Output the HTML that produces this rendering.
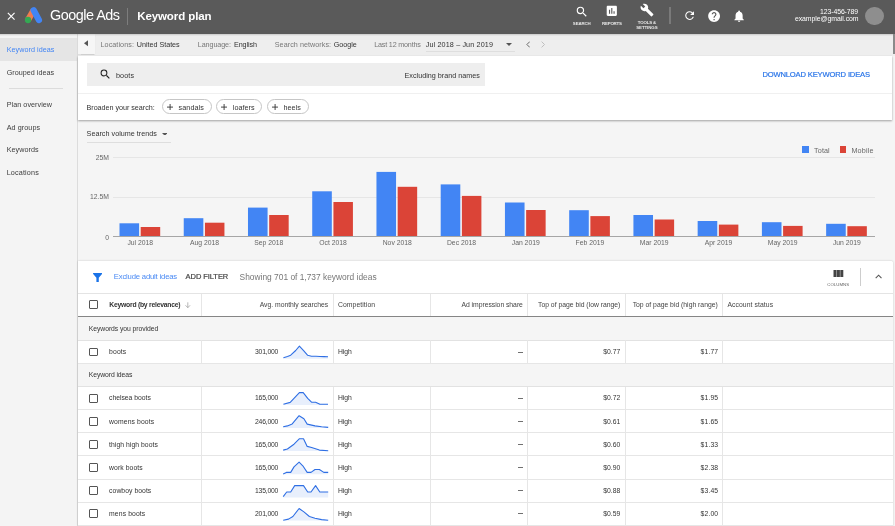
<!DOCTYPE html>
<html><head><meta charset="utf-8"><title>Keyword plan</title>
<style>
html,body{margin:0;padding:0;}
body{width:895px;height:526px;overflow:hidden;position:relative;background:#f5f5f5;font-family:"Liberation Sans",sans-serif;}
.t{position:absolute;white-space:nowrap;display:block;}
.r{position:absolute;display:block;}
#w{position:absolute;left:0;top:0;width:895px;height:526px;will-change:transform;}
</style></head><body><div id="w">
<div class="r" style="left:0px;top:0px;width:895.00px;height:33.50px;background:#5a5a5a;"></div>
<svg class="r" style="left:7px;top:12px" width="8.4" height="8.4" viewBox="0 0 10 10"><path d="M1 1L9 9M9 1L1 9" stroke="#fff" stroke-width="1.4" fill="none"/></svg>
<svg class="r" style="left:0;top:0" width="60" height="34" viewBox="0 0 60 34">
<path d="M28 20 L33.600 10.300" stroke="#ef7c4f" stroke-width="6.300" stroke-linecap="butt" fill="none"/>
<path d="M33.700 10.300 L38.900 19.900" stroke="#4285f4" stroke-width="6.300" stroke-linecap="round" fill="none"/>
<circle cx="28" cy="20" r="3.150" fill="#34a853"/>
</svg>
<span class="t" style="left:50.00px;top:4.04px;font-size:14.4px;line-height:23px;color:#fff;letter-spacing:-0.485px;">Google Ads</span>
<div class="r" style="left:127.2px;top:7.5px;width:1.10px;height:17.00px;background:#7d7d7d;"></div>
<span class="t" style="left:137.20px;top:7.15px;font-size:11.5px;line-height:18px;color:#fff;font-weight:bold;letter-spacing:-0.092px;">Keyword plan</span>
<svg class="r" style="left:575.2px;top:4.5px" width="13.7" height="13.7" viewBox="0 0 24 24"><path fill="#fff" d="M15.5 14h-.79l-.28-.27A6.471 6.471 0 0 0 16 9.5 6.5 6.5 0 1 0 9.5 16c1.61 0 3.09-.59 4.23-1.57l.27.28v.79l5 4.99L20.49 19l-4.99-5zm-6 0C7.01 14 5 11.99 5 9.500S7.01 5 9.5 5 14 7.01 14 9.500 11.990 14 9.500 14z"/></svg>
<span class="t" style="left:572.85px;top:19.74px;font-size:4.4px;line-height:7px;color:#e8e8e8;font-weight:bold;letter-spacing:-0.147px;">SEARCH</span>
<svg class="r" style="left:605.2px;top:4.2px" width="13.6" height="13.6" viewBox="0 0 24 24"><path fill="#fff" d="M19 3H5c-1.1 0-2 .9-2 2v14c0 1.100.9 2 2 2h14c1.100 0 2-.9 2-2V5c0-1.100-.9-2-2-2zM9 17H7v-7h2v7zm4 0h-2V7h2v10zm4 0h-2v-4h2v4z"/></svg>
<span class="t" style="left:601.90px;top:19.74px;font-size:4.4px;line-height:7px;color:#e8e8e8;font-weight:bold;letter-spacing:-0.181px;">REPORTS</span>
<svg class="r" style="left:640.1px;top:3.4px" width="14" height="14" viewBox="0 0 24 24"><path fill="#fff" d="M22.700 19l-9.100-9.100c.9-2.300.4-5-1.500-6.900-2-2-5-2.400-7.400-1.300L9 6 6 9 1.600 4.700C.4 7.100.9 10.100 2.900 12.100c1.900 1.900 4.600 2.400 6.900 1.500l9.100 9.100c.4.4 1 .4 1.400 0l2.300-2.300c.5-.4.5-1.100.1-1.400z"/></svg>
<span class="t" style="left:637.77px;top:18.64px;font-size:4.4px;line-height:7px;color:#e8e8e8;font-weight:bold;letter-spacing:-0.175px;">TOOLS &amp;</span>
<span class="t" style="left:636.27px;top:23.74px;font-size:4.4px;line-height:7px;color:#e8e8e8;font-weight:bold;letter-spacing:-0.094px;">SETTINGS</span>
<div class="r" style="left:669px;top:7px;width:1.60px;height:17.40px;background:#7a7a7a;"></div>
<svg class="r" style="left:682.5px;top:9.3px" width="13.2" height="13.2" viewBox="0 0 24 24"><path fill="#fff" d="M17.650 6.350A7.958 7.958 0 0 0 12 4c-4.420 0-7.990 3.580-7.990 8s3.570 8 7.990 8c3.730 0 6.840-2.550 7.730-6h-2.080A5.990 5.990 0 0 1 12 18c-3.310 0-6-2.690-6-6s2.690-6 6-6c1.660 0 3.140.69 4.220 1.780L13 11h7V4l-2.350 2.350z"/></svg>
<svg class="r" style="left:706.7px;top:8.65px" width="14.2" height="14.2" viewBox="0 0 24 24"><path fill="#fff" d="M12 2C6.480 2 2 6.480 2 12s4.480 10 10 10 10-4.480 10-10S17.520 2 12 2zm1 17h-2v-2h2v2zm2.070-7.750l-.9.920C13.450 12.900 13 13.500 13 15h-2v-.5c0-1.100.45-2.100 1.170-2.830l1.240-1.260c.37-.36.590-.86.590-1.410 0-1.100-.9-2-2-2s-2 .9-2 2H8c0-2.210 1.790-4 4-4s4 1.790 4 4c0 .88-.36 1.680-.93 2.250z"/></svg>
<svg class="r" style="left:731.7px;top:8.9px" width="14.2" height="14.2" viewBox="0 0 24 24"><path fill="#fff" d="M12 22c1.100 0 2-.9 2-2h-4c0 1.100.89 2 2 2zm6-6v-5c0-3.070-1.640-5.640-4.500-6.320V4c0-.83-.67-1.500-1.500-1.500s-1.500.67-1.500 1.500v.68C7.630 5.360 6 7.920 6 11v5l-2 2v1h16v-1l-2-2z"/></svg>
<span class="t" style="left:820.10px;top:5.69px;font-size:6.9px;line-height:11px;color:#fff;letter-spacing:-0.112px;">123-456-789</span>
<span class="t" style="left:794.90px;top:13.19px;font-size:6.9px;line-height:11px;color:#fff;letter-spacing:-0.049px;">example@gmail.com</span>
<div class="r" style="left:865.2px;top:6.8px;width:18.6px;height:18.6px;border-radius:50%;background:#8e8e8e"></div>
<div class="r" style="left:0px;top:33.5px;width:78.00px;height:492.50px;background:#f4f4f4;border-right:1px solid #dcdcdc;box-sizing:border-box;"></div>
<div class="r" style="left:0px;top:38.2px;width:77.00px;height:22.50px;background:#e5e5e5;"></div>
<span class="t" style="left:6.70px;top:44.22px;font-size:7.2px;line-height:12px;color:#4285f4;letter-spacing:0.044px;">Keyword ideas</span>
<span class="t" style="left:6.70px;top:66.72px;font-size:7.2px;line-height:12px;color:#3c3c3c;letter-spacing:0.021px;">Grouped ideas</span>
<div class="r" style="left:9px;top:87.8px;width:54.30px;height:0.80px;background:#dcdcdc;"></div>
<span class="t" style="left:6.70px;top:99.02px;font-size:7.2px;line-height:12px;color:#3c3c3c;letter-spacing:0.052px;">Plan overview</span>
<span class="t" style="left:6.70px;top:121.82px;font-size:7.2px;line-height:12px;color:#3c3c3c;letter-spacing:0.075px;">Ad groups</span>
<span class="t" style="left:6.70px;top:144.32px;font-size:7.2px;line-height:12px;color:#3c3c3c;letter-spacing:0.048px;">Keywords</span>
<span class="t" style="left:6.70px;top:166.82px;font-size:7.2px;line-height:12px;color:#3c3c3c;letter-spacing:0.164px;">Locations</span>
<div class="r" style="left:77.5px;top:33.5px;width:817.50px;height:22.50px;background:#eeeeee;"></div>
<div class="r" style="left:78px;top:33.5px;width:17.20px;height:20.50px;background:#f6f6f6;box-shadow:0 0.5px 1px rgba(0,0,0,.13);"></div>
<svg class="r" style="left:84.3px;top:40.3px" width="4" height="6.5" viewBox="0 0 4 6"><path d="M4 0L0 3L4 6Z" fill="#555"/></svg>
<span class="t" style="left:100.50px;top:38.92px;font-size:7.2px;line-height:12px;color:#777;letter-spacing:0.068px;">Locations:</span>
<span class="t" style="left:136.75px;top:38.92px;font-size:7.2px;line-height:12px;color:#333;letter-spacing:-0.017px;">United States</span>
<span class="t" style="left:197.75px;top:38.92px;font-size:7.2px;line-height:12px;color:#777;letter-spacing:-0.087px;">Language:</span>
<span class="t" style="left:234.00px;top:38.92px;font-size:7.2px;line-height:12px;color:#333;letter-spacing:-0.088px;">English</span>
<span class="t" style="left:274.75px;top:38.92px;font-size:7.2px;line-height:12px;color:#777;letter-spacing:0.055px;">Search networks:</span>
<span class="t" style="left:333.75px;top:38.92px;font-size:7.2px;line-height:12px;color:#333;letter-spacing:-0.036px;">Google</span>
<span class="t" style="left:374.25px;top:38.92px;font-size:7.2px;line-height:12px;color:#777;letter-spacing:-0.195px;">Last 12 months</span>
<span class="t" style="left:425.75px;top:38.92px;font-size:7.2px;line-height:12px;color:#333;letter-spacing:0.134px;">Jul 2018 – Jun 2019</span>
<svg class="r" style="left:505.7px;top:42.8px" width="6" height="3" viewBox="0 0 6 3"><path d="M0 0L6 0L3 3Z" fill="#555"/></svg>
<div class="r" style="left:425.5px;top:51px;width:89.50px;height:0.60px;background:#dedede;"></div>
<svg class="r" style="left:526px;top:40.7px" width="4.4" height="7" viewBox="0 0 4.4 7"><path d="M3.8 0.6L0.9 3.5L3.8 6.4" stroke="#606060" stroke-width="0.950" fill="none"/></svg>
<svg class="r" style="left:541.4px;top:40.7px" width="4.4" height="7" viewBox="0 0 4.4 7"><path d="M0.6 0.6L3.5 3.5L0.600 6.4" stroke="#bcbcbc" stroke-width="0.950" fill="none"/></svg>
<div class="r" style="left:0px;top:34px;width:895.00px;height:2.00px;background:linear-gradient(rgba(0,0,0,0.16),rgba(0,0,0,0));"></div>
<div class="r" style="left:893px;top:33.5px;width:2.00px;height:20.50px;background:#8a8a8a;"></div>
<div class="r" style="left:78px;top:56px;width:814.30px;height:64.00px;background:#fff;box-shadow:0 1px 2px rgba(0,0,0,.35);"></div>
<div class="r" style="left:86.5px;top:63px;width:398.20px;height:22.60px;background:#eeeeee;"></div>
<svg class="r" style="left:98.9px;top:68.4px" width="12.6" height="12.6" viewBox="0 0 24 24"><path fill="#222" d="M15.500 14h-.79l-.28-.27A6.471 6.471 0 0 0 16 9.500 6.500 6.500 0 1 0 9.500 16c1.610 0 3.090-.59 4.230-1.570l.27.28v.79l5 4.990L20.490 19l-4.990-5zm-6 0C7.010 14 5 11.990 5 9.500S7.010 5 9.500 5 14 7.010 14 9.500 11.990 14 9.500 14z"/></svg>
<span class="t" style="left:116.00px;top:69.72px;font-size:7.2px;line-height:12px;color:#333;letter-spacing:0.127px;">boots</span>
<span class="t" style="left:404.50px;top:69.72px;font-size:7.2px;line-height:12px;color:#333;letter-spacing:0.012px;">Excluding brand names</span>
<span class="t" style="left:762.40px;top:69.06px;font-size:7.6px;line-height:12px;color:#2a75e8;letter-spacing:-0.157px;-webkit-text-stroke:0.2px #2a75e8;">DOWNLOAD KEYWORD IDEAS</span>
<div class="r" style="left:78px;top:92.8px;width:814.30px;height:0.80px;background:#f0f0f0;"></div>
<span class="t" style="left:86.50px;top:101.72px;font-size:7.2px;line-height:12px;color:#333;letter-spacing:-0.029px;">Broaden your search:</span>
<div class="r" style="left:162px;top:99.4px;width:49.5px;height:15px;box-sizing:border-box;border:0.8px solid #c6c6c6;border-radius:7.5px;background:#fff"></div>
<svg class="r" style="left:166.5px;top:103.7px" width="6.200" height="6.200" viewBox="0 0 6.2 6.2"><path d="M3.100 0V6.200M0 3.100H6.200" stroke="#333" stroke-width="0.900"/></svg>
<span class="t" style="left:178.50px;top:101.72px;font-size:7.2px;line-height:12px;color:#333;letter-spacing:0.098px;">sandals</span>
<div class="r" style="left:216px;top:99.4px;width:46.19999999999999px;height:15px;box-sizing:border-box;border:0.8px solid #c6c6c6;border-radius:7.5px;background:#fff"></div>
<svg class="r" style="left:220.8px;top:103.7px" width="6.200" height="6.200" viewBox="0 0 6.2 6.2"><path d="M3.100 0V6.200M0 3.100H6.200" stroke="#333" stroke-width="0.900"/></svg>
<span class="t" style="left:232.75px;top:101.72px;font-size:7.2px;line-height:12px;color:#333;letter-spacing:0.056px;">loafers</span>
<div class="r" style="left:267px;top:99.4px;width:41.80000000000001px;height:15px;box-sizing:border-box;border:0.8px solid #c6c6c6;border-radius:7.5px;background:#fff"></div>
<svg class="r" style="left:271.5px;top:103.7px" width="6.200" height="6.200" viewBox="0 0 6.2 6.2"><path d="M3.100 0V6.200M0 3.100H6.200" stroke="#333" stroke-width="0.900"/></svg>
<span class="t" style="left:283.50px;top:101.72px;font-size:7.2px;line-height:12px;color:#333;letter-spacing:0.017px;">heels</span>
<span class="t" style="left:86.60px;top:128.12px;font-size:7.2px;line-height:12px;color:#333;letter-spacing:0.023px;">Search volume trends</span>
<svg class="r" style="left:161.6px;top:132.5px" width="5.6" height="2.8" viewBox="0 0 6 3"><path d="M0 0L6 0L3 3Z" fill="#555"/></svg>
<div class="r" style="left:86.6px;top:141.8px;width:84.40px;height:0.70px;background:#dedede;"></div>
<div class="r" style="left:112.7px;top:156.5px;width:762.50px;height:0.70px;background:#e6e6e6;"></div>
<div class="r" style="left:112.7px;top:196.6px;width:762.50px;height:0.70px;background:#e6e6e6;"></div>
<span class="t" style="left:95.77px;top:152.18px;font-size:6.8px;line-height:11px;color:#666;">25M</span>
<span class="t" style="left:90.10px;top:190.98px;font-size:6.8px;line-height:11px;color:#666;">12.5M</span>
<span class="t" style="left:105.22px;top:231.68px;font-size:6.8px;line-height:11px;color:#666;">0</span>
<span class="t" style="left:127.45px;top:237.28px;font-size:6.8px;line-height:11px;color:#666;">Jul 2018</span>
<span class="t" style="left:189.98px;top:237.28px;font-size:6.8px;line-height:11px;color:#666;">Aug 2018</span>
<span class="t" style="left:254.22px;top:237.28px;font-size:6.8px;line-height:11px;color:#666;">Sep 2018</span>
<span class="t" style="left:319.22px;top:237.28px;font-size:6.8px;line-height:11px;color:#666;">Oct 2018</span>
<span class="t" style="left:382.71px;top:237.28px;font-size:6.8px;line-height:11px;color:#666;">Nov 2018</span>
<span class="t" style="left:446.95px;top:237.28px;font-size:6.8px;line-height:11px;color:#666;">Dec 2018</span>
<span class="t" style="left:511.75px;top:237.28px;font-size:6.8px;line-height:11px;color:#666;">Jan 2019</span>
<span class="t" style="left:575.61px;top:237.28px;font-size:6.8px;line-height:11px;color:#666;">Feb 2019</span>
<span class="t" style="left:639.86px;top:237.28px;font-size:6.8px;line-height:11px;color:#666;">Mar 2019</span>
<span class="t" style="left:704.66px;top:237.28px;font-size:6.8px;line-height:11px;color:#666;">Apr 2019</span>
<span class="t" style="left:767.77px;top:237.28px;font-size:6.8px;line-height:11px;color:#666;">May 2019</span>
<span class="t" style="left:832.95px;top:237.28px;font-size:6.8px;line-height:11px;color:#666;">Jun 2019</span>
<svg class="r" style="left:0;top:0" width="895" height="260" viewBox="0 0 895 260"><rect x="119.50" y="223.30" width="19.6" height="13.10" fill="#4285f4"/><rect x="140.70" y="227.00" width="19.5" height="9.40" fill="#db4437"/><rect x="183.74" y="218.20" width="19.6" height="18.20" fill="#4285f4"/><rect x="204.94" y="222.70" width="19.5" height="13.70" fill="#db4437"/><rect x="247.98" y="207.60" width="19.6" height="28.80" fill="#4285f4"/><rect x="269.18" y="215.00" width="19.5" height="21.40" fill="#db4437"/><rect x="312.22" y="191.30" width="19.6" height="45.10" fill="#4285f4"/><rect x="333.42" y="202.00" width="19.5" height="34.40" fill="#db4437"/><rect x="376.46" y="171.90" width="19.6" height="64.50" fill="#4285f4"/><rect x="397.66" y="186.80" width="19.5" height="49.60" fill="#db4437"/><rect x="440.70" y="184.40" width="19.6" height="52.00" fill="#4285f4"/><rect x="461.90" y="195.90" width="19.5" height="40.50" fill="#db4437"/><rect x="504.94" y="202.50" width="19.6" height="33.90" fill="#4285f4"/><rect x="526.14" y="210.00" width="19.5" height="26.40" fill="#db4437"/><rect x="569.18" y="210.20" width="19.6" height="26.20" fill="#4285f4"/><rect x="590.38" y="216.10" width="19.5" height="20.30" fill="#db4437"/><rect x="633.42" y="215.00" width="19.6" height="21.40" fill="#4285f4"/><rect x="654.62" y="219.50" width="19.5" height="16.90" fill="#db4437"/><rect x="697.66" y="221.00" width="19.6" height="15.40" fill="#4285f4"/><rect x="718.86" y="224.60" width="19.5" height="11.80" fill="#db4437"/><rect x="761.90" y="222.20" width="19.6" height="14.20" fill="#4285f4"/><rect x="783.10" y="225.90" width="19.5" height="10.50" fill="#db4437"/><rect x="826.14" y="223.80" width="19.6" height="12.60" fill="#4285f4"/><rect x="847.34" y="226.20" width="19.5" height="10.20" fill="#db4437"/></svg>
<div class="r" style="left:112.7px;top:236.3px;width:762.50px;height:0.80px;background:#a6a6a6;"></div>
<div class="r" style="left:802.2px;top:146px;width:6.80px;height:6.60px;background:#4285f4;"></div>
<span class="t" style="left:814.10px;top:144.52px;font-size:7.2px;line-height:12px;color:#666;letter-spacing:0.098px;">Total</span>
<div class="r" style="left:839.7px;top:146px;width:6.80px;height:6.60px;background:#db4437;"></div>
<span class="t" style="left:851.40px;top:144.52px;font-size:7.2px;line-height:12px;color:#666;letter-spacing:0.182px;">Mobile</span>
<div class="r" style="left:78px;top:261px;width:814.60px;height:265.00px;background:#fff;box-shadow:0 0 2px rgba(0,0,0,.22);border-radius:0 1.500px 0 0;"></div>
<svg class="r" style="left:93.3px;top:272.7px" width="9.2" height="9.3" viewBox="0 0 10 10" preserveAspectRatio="none"><path fill="#1a73e8" d="M0.3 0H9.7Q10.300 0.3 9.800 1L6.300 5.200V9.500Q6.300 10 5.800 10H4.200Q3.700 10 3.700 9.500V5.200L0.200 1Q-0.300 0.300 0.300 0Z"/></svg>
<span class="t" style="left:113.80px;top:271.17px;font-size:7.7px;line-height:12px;color:#4a8af4;letter-spacing:-0.183px;">Exclude adult ideas</span>
<span class="t" style="left:185.60px;top:271.25px;font-size:7.5px;line-height:12px;color:#444;letter-spacing:-0.060px;-webkit-text-stroke:0.2px #444;">ADD FILTER</span>
<span class="t" style="left:239.60px;top:270.84px;font-size:8.4px;line-height:13px;color:#777;letter-spacing:0.003px;">Showing 701 of 1,737 keyword ideas</span>
<svg class="r" style="left:833px;top:269px" width="12" height="9" viewBox="0 0 12 9"><path d="M0.500 0.900h3v7.200h-3zM3.900 0.900h3v7.200h-3zM7.300 0.900h3v7.200h-3z" fill="#444"/></svg>
<span class="t" style="left:827.30px;top:281.33px;font-size:4.3px;line-height:7px;color:#606060;letter-spacing:0.043px;">COLUMNS</span>
<div class="r" style="left:860px;top:268px;width:0.80px;height:17.90px;background:#cdcdcd;"></div>
<svg class="r" style="left:875px;top:274.400px" width="7.200" height="4.800" viewBox="0 0 7.2 4.8"><path d="M0.700 4.100L3.600 1.200L6.500 4.100" stroke="#555" stroke-width="1.100" fill="none"/></svg>
<div class="r" style="left:78px;top:293px;width:814.60px;height:0.70px;background:#e4e4e4;"></div>
<div class="r" style="left:89.2px;top:300.40px;width:8.8px;height:8.8px;box-sizing:border-box;border:1.1px solid #555;border-radius:1px;background:#fff"></div>
<span class="t" style="left:109.30px;top:299.28px;font-size:6.8px;line-height:11px;color:#333;font-weight:bold;letter-spacing:-0.243px;">Keyword (by relevance)</span>
<svg class="r" style="left:185.200px;top:302.20000000000005px" width="5.6" height="6.4" viewBox="0 0 5.6 6.4"><path d="M2.800 0.300V5.600M0.500 3.300L2.800 5.700L5.100 3.300" stroke="#999" stroke-width="0.700" fill="none"/></svg>
<span class="t" style="left:259.70px;top:299.28px;font-size:6.8px;line-height:11px;color:#444;letter-spacing:-0.008px;">Avg. monthly searches</span>
<span class="t" style="left:337.90px;top:299.28px;font-size:6.8px;line-height:11px;color:#444;letter-spacing:0.092px;">Competition</span>
<span class="t" style="left:461.40px;top:299.28px;font-size:6.8px;line-height:11px;color:#444;letter-spacing:-0.025px;">Ad impression share</span>
<span class="t" style="left:538.00px;top:299.28px;font-size:6.8px;line-height:11px;color:#444;">Top of page bid (low range)</span>
<span class="t" style="left:632.70px;top:299.28px;font-size:6.8px;line-height:11px;color:#444;letter-spacing:0.001px;">Top of page bid (high range)</span>
<span class="t" style="left:727.40px;top:299.28px;font-size:6.8px;line-height:11px;color:#444;letter-spacing:0.086px;">Account status</span>
<div class="r" style="left:201.25px;top:293.7px;width:0.70px;height:22.30px;background:#e6e6e6;"></div>
<div class="r" style="left:333.04999999999995px;top:293.7px;width:0.70px;height:22.30px;background:#e6e6e6;"></div>
<div class="r" style="left:430.15px;top:293.7px;width:0.70px;height:22.30px;background:#e6e6e6;"></div>
<div class="r" style="left:527.35px;top:293.7px;width:0.70px;height:22.30px;background:#e6e6e6;"></div>
<div class="r" style="left:625.25px;top:293.7px;width:0.70px;height:22.30px;background:#e6e6e6;"></div>
<div class="r" style="left:721.9499999999999px;top:293.7px;width:0.70px;height:22.30px;background:#e6e6e6;"></div>
<div class="r" style="left:78px;top:315.6px;width:814.60px;height:1.30px;background:#858585;"></div>
<div class="r" style="left:78px;top:316.9px;width:814.60px;height:23.50px;background:#f5f5f5;"></div>
<span class="t" style="left:88.80px;top:323.13px;font-size:6.8px;line-height:11px;color:#333;letter-spacing:-0.061px;">Keywords you provided</span>
<div class="r" style="left:78px;top:340.04999999999995px;width:814.60px;height:0.70px;background:#e2e2e2;"></div>
<div class="r" style="left:89.2px;top:347.60px;width:8.8px;height:8.8px;box-sizing:border-box;border:1.1px solid #555;border-radius:1px;background:#fff"></div>
<span class="t" style="left:109.10px;top:346.28px;font-size:6.8px;line-height:11px;color:#333;letter-spacing:0.113px;">boots</span>
<span class="t" style="left:255.00px;top:346.28px;font-size:6.8px;line-height:11px;color:#333;letter-spacing:-0.211px;">301,000</span>
<svg class="r" style="left:0;top:0" width="895" height="526" viewBox="0 0 895 526"><path d="M283.4 357.8 L287.5 356.5 L290.7 355.2 L295.7 350.5 L299.4 346.2 L303.6 350.6 L307.7 355.3 L311.5 356.2 L316.0 356.3 L320.0 356.5 L324.0 356.6 L328.0 356.7 L328.0 358.7 L283.4 358.7 Z" fill="#e8effc"/><path d="M283.4 357.8 L287.5 356.5 L290.7 355.2 L295.7 350.5 L299.4 346.2 L303.6 350.6 L307.7 355.3 L311.5 356.2 L316.0 356.3 L320.0 356.5 L324.0 356.6 L328.0 356.7" stroke="#2f6fe4" stroke-width="1.1" fill="none" stroke-linejoin="round"/></svg>
<span class="t" style="left:337.90px;top:346.28px;font-size:6.8px;line-height:11px;color:#333;letter-spacing:0.004px;">High</span>
<div class="r" style="left:518.4px;top:351.65px;width:4.90px;height:0.70px;background:#707070;"></div>
<span class="t" style="left:603.30px;top:346.28px;font-size:6.8px;line-height:11px;color:#333;letter-spacing:-0.023px;">$0.77</span>
<span class="t" style="left:700.60px;top:346.28px;font-size:6.8px;line-height:11px;color:#333;letter-spacing:0.117px;">$1.77</span>
<div class="r" style="left:201.25px;top:340.4px;width:0.70px;height:23.00px;background:#e6e6e6;"></div>
<div class="r" style="left:333.04999999999995px;top:340.4px;width:0.70px;height:23.00px;background:#e6e6e6;"></div>
<div class="r" style="left:430.15px;top:340.4px;width:0.70px;height:23.00px;background:#e6e6e6;"></div>
<div class="r" style="left:527.35px;top:340.4px;width:0.70px;height:23.00px;background:#e6e6e6;"></div>
<div class="r" style="left:625.25px;top:340.4px;width:0.70px;height:23.00px;background:#e6e6e6;"></div>
<div class="r" style="left:721.9499999999999px;top:340.4px;width:0.70px;height:23.00px;background:#e6e6e6;"></div>
<div class="r" style="left:78px;top:363.4px;width:814.60px;height:23.10px;background:#f5f5f5;"></div>
<span class="t" style="left:88.80px;top:369.43px;font-size:6.8px;line-height:11px;color:#333;letter-spacing:-0.085px;">Keyword ideas</span>
<div class="r" style="left:78px;top:386.15px;width:814.60px;height:0.70px;background:#e2e2e2;"></div>
<div class="r" style="left:89.2px;top:393.75px;width:8.8px;height:8.8px;box-sizing:border-box;border:1.1px solid #555;border-radius:1px;background:#fff"></div>
<span class="t" style="left:109.10px;top:392.43px;font-size:6.8px;line-height:11px;color:#333;letter-spacing:-0.020px;">chelsea boots</span>
<span class="t" style="left:255.00px;top:392.43px;font-size:6.8px;line-height:11px;color:#333;letter-spacing:-0.211px;">165,000</span>
<svg class="r" style="left:0;top:0" width="895" height="526" viewBox="0 0 895 526"><path d="M283.4 404.2 L290.2 402.4 L299.4 392.6 L303.2 392.6 L307.7 398.4 L311.5 402.2 L315.6 402.2 L319.9 404.3 L328.0 404.3 L328.0 404.9 L283.4 404.9 Z" fill="#e8effc"/><path d="M283.4 404.2 L290.2 402.4 L299.4 392.6 L303.2 392.6 L307.7 398.4 L311.5 402.2 L315.6 402.2 L319.9 404.3 L328.0 404.3" stroke="#2f6fe4" stroke-width="1.1" fill="none" stroke-linejoin="round"/></svg>
<span class="t" style="left:337.90px;top:392.43px;font-size:6.8px;line-height:11px;color:#333;letter-spacing:0.004px;">High</span>
<div class="r" style="left:518.4px;top:397.8px;width:4.90px;height:0.70px;background:#707070;"></div>
<span class="t" style="left:603.30px;top:392.43px;font-size:6.8px;line-height:11px;color:#333;letter-spacing:-0.023px;">$0.72</span>
<span class="t" style="left:700.60px;top:392.43px;font-size:6.8px;line-height:11px;color:#333;letter-spacing:0.117px;">$1.95</span>
<div class="r" style="left:201.25px;top:386.5px;width:0.70px;height:23.10px;background:#e6e6e6;"></div>
<div class="r" style="left:333.04999999999995px;top:386.5px;width:0.70px;height:23.10px;background:#e6e6e6;"></div>
<div class="r" style="left:430.15px;top:386.5px;width:0.70px;height:23.10px;background:#e6e6e6;"></div>
<div class="r" style="left:527.35px;top:386.5px;width:0.70px;height:23.10px;background:#e6e6e6;"></div>
<div class="r" style="left:625.25px;top:386.5px;width:0.70px;height:23.10px;background:#e6e6e6;"></div>
<div class="r" style="left:721.9499999999999px;top:386.5px;width:0.70px;height:23.10px;background:#e6e6e6;"></div>
<div class="r" style="left:89.2px;top:416.85px;width:8.8px;height:8.8px;box-sizing:border-box;border:1.1px solid #555;border-radius:1px;background:#fff"></div>
<span class="t" style="left:109.10px;top:415.53px;font-size:6.8px;line-height:11px;color:#333;letter-spacing:0.113px;">womens boots</span>
<span class="t" style="left:255.00px;top:415.53px;font-size:6.8px;line-height:11px;color:#333;letter-spacing:-0.211px;">246,000</span>
<svg class="r" style="left:0;top:0" width="895" height="526" viewBox="0 0 895 526"><path d="M283.2 426.8 L287.4 425.9 L292.2 423.9 L299.1 415.7 L303.9 418.8 L307.2 424.1 L315.0 425.9 L321.6 426.8 L328.2 427.4 L328.2 428.0 L283.2 428.0 Z" fill="#e8effc"/><path d="M283.2 426.8 L287.4 425.9 L292.2 423.9 L299.1 415.7 L303.9 418.8 L307.2 424.1 L315.0 425.9 L321.6 426.8 L328.2 427.4" stroke="#2f6fe4" stroke-width="1.1" fill="none" stroke-linejoin="round"/></svg>
<span class="t" style="left:337.90px;top:415.53px;font-size:6.8px;line-height:11px;color:#333;letter-spacing:0.004px;">High</span>
<div class="r" style="left:518.4px;top:420.9px;width:4.90px;height:0.70px;background:#707070;"></div>
<span class="t" style="left:603.30px;top:415.53px;font-size:6.8px;line-height:11px;color:#333;letter-spacing:-0.023px;">$0.61</span>
<span class="t" style="left:700.60px;top:415.53px;font-size:6.8px;line-height:11px;color:#333;letter-spacing:0.117px;">$1.65</span>
<div class="r" style="left:201.25px;top:409.6px;width:0.70px;height:23.10px;background:#e6e6e6;"></div>
<div class="r" style="left:333.04999999999995px;top:409.6px;width:0.70px;height:23.10px;background:#e6e6e6;"></div>
<div class="r" style="left:430.15px;top:409.6px;width:0.70px;height:23.10px;background:#e6e6e6;"></div>
<div class="r" style="left:527.35px;top:409.6px;width:0.70px;height:23.10px;background:#e6e6e6;"></div>
<div class="r" style="left:625.25px;top:409.6px;width:0.70px;height:23.10px;background:#e6e6e6;"></div>
<div class="r" style="left:721.9499999999999px;top:409.6px;width:0.70px;height:23.10px;background:#e6e6e6;"></div>
<div class="r" style="left:89.2px;top:439.95px;width:8.8px;height:8.8px;box-sizing:border-box;border:1.1px solid #555;border-radius:1px;background:#fff"></div>
<span class="t" style="left:109.10px;top:438.63px;font-size:6.8px;line-height:11px;color:#333;letter-spacing:0.049px;">thigh high boots</span>
<span class="t" style="left:255.00px;top:438.63px;font-size:6.8px;line-height:11px;color:#333;letter-spacing:-0.211px;">165,000</span>
<svg class="r" style="left:0;top:0" width="895" height="526" viewBox="0 0 895 526"><path d="M283.2 450.1 L287.4 449.0 L294.0 444.2 L299.5 438.7 L303.5 438.7 L307.2 446.4 L311.6 447.5 L319.4 450.1 L328.2 450.8 L328.2 451.1 L283.2 451.1 Z" fill="#e8effc"/><path d="M283.2 450.1 L287.4 449.0 L294.0 444.2 L299.5 438.7 L303.5 438.7 L307.2 446.4 L311.6 447.5 L319.4 450.1 L328.2 450.8" stroke="#2f6fe4" stroke-width="1.1" fill="none" stroke-linejoin="round"/></svg>
<span class="t" style="left:337.90px;top:438.63px;font-size:6.8px;line-height:11px;color:#333;letter-spacing:0.004px;">High</span>
<div class="r" style="left:518.4px;top:444.0px;width:4.90px;height:0.70px;background:#707070;"></div>
<span class="t" style="left:603.30px;top:438.63px;font-size:6.8px;line-height:11px;color:#333;letter-spacing:-0.023px;">$0.60</span>
<span class="t" style="left:700.60px;top:438.63px;font-size:6.8px;line-height:11px;color:#333;letter-spacing:0.117px;">$1.33</span>
<div class="r" style="left:201.25px;top:432.7px;width:0.70px;height:23.10px;background:#e6e6e6;"></div>
<div class="r" style="left:333.04999999999995px;top:432.7px;width:0.70px;height:23.10px;background:#e6e6e6;"></div>
<div class="r" style="left:430.15px;top:432.7px;width:0.70px;height:23.10px;background:#e6e6e6;"></div>
<div class="r" style="left:527.35px;top:432.7px;width:0.70px;height:23.10px;background:#e6e6e6;"></div>
<div class="r" style="left:625.25px;top:432.7px;width:0.70px;height:23.10px;background:#e6e6e6;"></div>
<div class="r" style="left:721.9499999999999px;top:432.7px;width:0.70px;height:23.10px;background:#e6e6e6;"></div>
<div class="r" style="left:89.2px;top:463.10px;width:8.8px;height:8.8px;box-sizing:border-box;border:1.1px solid #555;border-radius:1px;background:#fff"></div>
<span class="t" style="left:109.10px;top:461.78px;font-size:6.8px;line-height:11px;color:#333;letter-spacing:0.082px;">work boots</span>
<span class="t" style="left:255.00px;top:461.78px;font-size:6.8px;line-height:11px;color:#333;letter-spacing:-0.211px;">165,000</span>
<svg class="r" style="left:0;top:0" width="895" height="526" viewBox="0 0 895 526"><path d="M283.2 473.9 L286.3 472.4 L290.7 472.4 L294.0 466.9 L299.1 462.2 L302.8 465.8 L307.2 472.4 L311.0 472.4 L315.0 469.5 L319.4 469.5 L323.8 472.4 L328.2 472.4 L328.2 474.3 L283.2 474.3 Z" fill="#e8effc"/><path d="M283.2 473.9 L286.3 472.4 L290.7 472.4 L294.0 466.9 L299.1 462.2 L302.8 465.8 L307.2 472.4 L311.0 472.4 L315.0 469.5 L319.4 469.5 L323.8 472.4 L328.2 472.4" stroke="#2f6fe4" stroke-width="1.1" fill="none" stroke-linejoin="round"/></svg>
<span class="t" style="left:337.90px;top:461.78px;font-size:6.8px;line-height:11px;color:#333;letter-spacing:0.004px;">High</span>
<div class="r" style="left:518.4px;top:467.15px;width:4.90px;height:0.70px;background:#707070;"></div>
<span class="t" style="left:603.30px;top:461.78px;font-size:6.8px;line-height:11px;color:#333;letter-spacing:-0.023px;">$0.90</span>
<span class="t" style="left:700.60px;top:461.78px;font-size:6.8px;line-height:11px;color:#333;letter-spacing:0.117px;">$2.38</span>
<div class="r" style="left:201.25px;top:455.8px;width:0.70px;height:23.20px;background:#e6e6e6;"></div>
<div class="r" style="left:333.04999999999995px;top:455.8px;width:0.70px;height:23.20px;background:#e6e6e6;"></div>
<div class="r" style="left:430.15px;top:455.8px;width:0.70px;height:23.20px;background:#e6e6e6;"></div>
<div class="r" style="left:527.35px;top:455.8px;width:0.70px;height:23.20px;background:#e6e6e6;"></div>
<div class="r" style="left:625.25px;top:455.8px;width:0.70px;height:23.20px;background:#e6e6e6;"></div>
<div class="r" style="left:721.9499999999999px;top:455.8px;width:0.70px;height:23.20px;background:#e6e6e6;"></div>
<div class="r" style="left:89.2px;top:486.25px;width:8.8px;height:8.8px;box-sizing:border-box;border:1.1px solid #555;border-radius:1px;background:#fff"></div>
<span class="t" style="left:109.10px;top:484.93px;font-size:6.8px;line-height:11px;color:#333;letter-spacing:0.052px;">cowboy boots</span>
<span class="t" style="left:255.00px;top:484.93px;font-size:6.8px;line-height:11px;color:#333;letter-spacing:-0.211px;">135,000</span>
<svg class="r" style="left:0;top:0" width="895" height="526" viewBox="0 0 895 526"><path d="M283.2 496.6 L286.7 492.0 L290.7 492.0 L294.7 485.6 L303.5 485.6 L307.7 492.0 L311.0 492.0 L315.6 485.6 L319.8 492.0 L328.2 492.0 L328.2 497.4 L283.2 497.4 Z" fill="#e8effc"/><path d="M283.2 496.6 L286.7 492.0 L290.7 492.0 L294.7 485.6 L303.5 485.6 L307.7 492.0 L311.0 492.0 L315.6 485.6 L319.8 492.0 L328.2 492.0" stroke="#2f6fe4" stroke-width="1.1" fill="none" stroke-linejoin="round"/></svg>
<span class="t" style="left:337.90px;top:484.93px;font-size:6.8px;line-height:11px;color:#333;letter-spacing:0.004px;">High</span>
<div class="r" style="left:518.4px;top:490.3px;width:4.90px;height:0.70px;background:#707070;"></div>
<span class="t" style="left:603.30px;top:484.93px;font-size:6.8px;line-height:11px;color:#333;letter-spacing:-0.023px;">$0.88</span>
<span class="t" style="left:700.60px;top:484.93px;font-size:6.8px;line-height:11px;color:#333;letter-spacing:0.117px;">$3.45</span>
<div class="r" style="left:201.25px;top:479.0px;width:0.70px;height:23.10px;background:#e6e6e6;"></div>
<div class="r" style="left:333.04999999999995px;top:479.0px;width:0.70px;height:23.10px;background:#e6e6e6;"></div>
<div class="r" style="left:430.15px;top:479.0px;width:0.70px;height:23.10px;background:#e6e6e6;"></div>
<div class="r" style="left:527.35px;top:479.0px;width:0.70px;height:23.10px;background:#e6e6e6;"></div>
<div class="r" style="left:625.25px;top:479.0px;width:0.70px;height:23.10px;background:#e6e6e6;"></div>
<div class="r" style="left:721.9499999999999px;top:479.0px;width:0.70px;height:23.10px;background:#e6e6e6;"></div>
<div class="r" style="left:89.2px;top:509.40px;width:8.8px;height:8.8px;box-sizing:border-box;border:1.1px solid #555;border-radius:1px;background:#fff"></div>
<span class="t" style="left:109.10px;top:508.08px;font-size:6.8px;line-height:11px;color:#333;letter-spacing:0.105px;">mens boots</span>
<span class="t" style="left:255.00px;top:508.08px;font-size:6.8px;line-height:11px;color:#333;letter-spacing:-0.211px;">201,000</span>
<svg class="r" style="left:0;top:0" width="895" height="526" viewBox="0 0 895 526"><path d="M283.2 520.2 L288.5 519.1 L292.9 516.5 L299.1 508.5 L303.9 511.9 L309.4 516.5 L315.0 518.2 L321.6 519.6 L328.2 520.2 L328.2 520.6 L283.2 520.6 Z" fill="#e8effc"/><path d="M283.2 520.2 L288.5 519.1 L292.9 516.5 L299.1 508.5 L303.9 511.9 L309.4 516.5 L315.0 518.2 L321.6 519.6 L328.2 520.2" stroke="#2f6fe4" stroke-width="1.1" fill="none" stroke-linejoin="round"/></svg>
<span class="t" style="left:337.90px;top:508.08px;font-size:6.8px;line-height:11px;color:#333;letter-spacing:0.004px;">High</span>
<div class="r" style="left:518.4px;top:513.45px;width:4.90px;height:0.70px;background:#707070;"></div>
<span class="t" style="left:603.30px;top:508.08px;font-size:6.8px;line-height:11px;color:#333;letter-spacing:-0.023px;">$0.59</span>
<span class="t" style="left:700.60px;top:508.08px;font-size:6.8px;line-height:11px;color:#333;letter-spacing:0.117px;">$2.00</span>
<div class="r" style="left:201.25px;top:502.1px;width:0.70px;height:23.20px;background:#e6e6e6;"></div>
<div class="r" style="left:333.04999999999995px;top:502.1px;width:0.70px;height:23.20px;background:#e6e6e6;"></div>
<div class="r" style="left:430.15px;top:502.1px;width:0.70px;height:23.20px;background:#e6e6e6;"></div>
<div class="r" style="left:527.35px;top:502.1px;width:0.70px;height:23.20px;background:#e6e6e6;"></div>
<div class="r" style="left:625.25px;top:502.1px;width:0.70px;height:23.20px;background:#e6e6e6;"></div>
<div class="r" style="left:721.9499999999999px;top:502.1px;width:0.70px;height:23.20px;background:#e6e6e6;"></div>
<div class="r" style="left:78px;top:363.04999999999995px;width:814.60px;height:0.70px;background:#e6e6e6;"></div>
<div class="r" style="left:78px;top:409.25px;width:814.60px;height:0.70px;background:#e6e6e6;"></div>
<div class="r" style="left:78px;top:432.34999999999997px;width:814.60px;height:0.70px;background:#e6e6e6;"></div>
<div class="r" style="left:78px;top:455.45px;width:814.60px;height:0.70px;background:#e6e6e6;"></div>
<div class="r" style="left:78px;top:478.65px;width:814.60px;height:0.70px;background:#e6e6e6;"></div>
<div class="r" style="left:78px;top:501.75px;width:814.60px;height:0.70px;background:#e6e6e6;"></div>
<div class="r" style="left:78px;top:524.9499999999999px;width:814.60px;height:0.70px;background:#e6e6e6;"></div>
</div></body></html>
